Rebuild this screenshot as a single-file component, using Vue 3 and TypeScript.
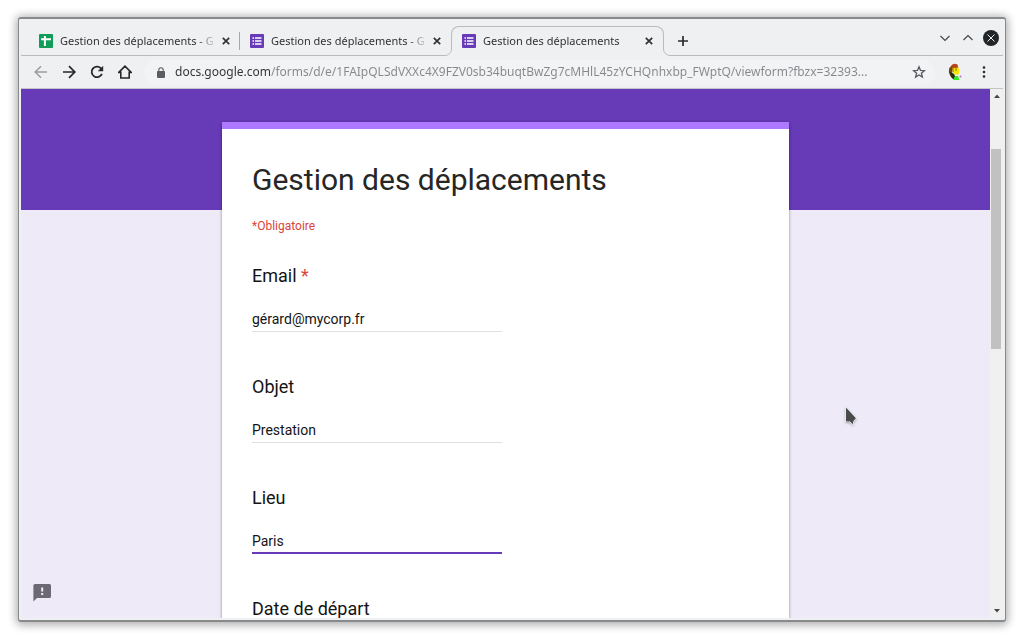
<script setup lang="ts">
import { ref } from 'vue'

interface Tab {
  id: number
  kind: 'sheet' | 'form'
  title: string
  active: boolean
}

interface Field {
  id: string
  label: string
  type: string
  required: boolean
  focused: boolean
  value: string
}

const tabs = ref<Tab[]>([
  { id: 1, kind: 'sheet', title: 'Gestion des déplacements - G', active: false },
  { id: 2, kind: 'form', title: 'Gestion des déplacements - G', active: false },
  { id: 3, kind: 'form', title: 'Gestion des déplacements', active: true },
])

const address = ref(
  'docs.google.com/forms/d/e/1FAIpQLSdVXXc4X9FZV0sb34buqtBwZg7cMHlL45zYCHQnhxbp_FWptQ/viewform?fbzx=32393...',
)

const fields = ref<Field[]>([
  { id: 'email', label: 'Email', type: 'text', required: true, focused: false, value: 'gérard@mycorp.fr' },
  { id: 'objet', label: 'Objet', type: 'text', required: false, focused: false, value: 'Prestation' },
  { id: 'lieu', label: 'Lieu', type: 'text', required: false, focused: true, value: 'Paris' },
  { id: 'depart', label: 'Date de départ', type: 'text', required: false, focused: false, value: '' },
])
</script>

<template>
  <div class="desktop">
    <div class="window">
      <header class="tabstrip">
        <nav class="tabs">
          <div v-for="tab in tabs" :key="tab.id" class="tab" :class="{ active: tab.active }">
            <svg v-if="tab.active" class="flare flare-left" viewBox="0 0 8 8" aria-hidden="true">
              <rect width="8" height="8" fill="#eff0f1" />
              <path d="M0 7.5H1A6.5 6.5 0 0 0 7.5 1V0" fill="none" stroke="#b9bbbe" />
            </svg>
            <button class="tab-label" type="button">
              <svg v-if="tab.kind === 'sheet'" class="favicon" viewBox="0 0 14 14" aria-hidden="true">
                <rect width="14" height="14" rx="1" fill="#0f9d58" />
                <path d="M2 5.2H12M5.9 2V12" stroke="#fff" stroke-width="2" fill="none" />
              </svg>
              <svg v-else class="favicon" viewBox="0 0 14 14" aria-hidden="true">
                <rect width="14" height="14" rx="1" fill="#673ab7" />
                <path
                  d="M2.5 4H4M5 4H11.5M2.5 7H4M5 7H11.5M2.5 10H4M5 10H11.5"
                  stroke="#fff"
                  stroke-width="1.7"
                  fill="none"
                />
              </svg>
              <span class="tab-title">{{ tab.title }}</span>
            </button>
            <button class="tab-close" type="button" aria-label="Fermer l'onglet">
              <svg viewBox="0 0 8 8" aria-hidden="true">
                <path d="M.8.8 7.2 7.2M7.2.8.8 7.2" stroke="#303336" stroke-width="1.7" />
              </svg>
            </button>
            <svg v-if="tab.active" class="flare flare-right" viewBox="0 0 8 8" aria-hidden="true">
              <rect width="8" height="8" fill="#eff0f1" />
              <path d="M8 7.5H7A6.5 6.5 0 0 1 .5 1V0" fill="none" stroke="#b9bbbe" />
            </svg>
          </div>
          <button class="new-tab" type="button" aria-label="Nouvel onglet">
            <svg viewBox="0 0 10 10" aria-hidden="true">
              <path d="M5 0V10M0 5H10" stroke="#2b2e31" stroke-width="1.7" />
            </svg>
          </button>
        </nav>
        <div class="window-controls">
          <button type="button" aria-label="Réduire">
            <svg viewBox="0 0 16 16" aria-hidden="true">
              <path d="M3.5 6 8 10.5 12.5 6" fill="none" stroke="#45484b" stroke-width="1.2" />
            </svg>
          </button>
          <button type="button" aria-label="Agrandir">
            <svg viewBox="0 0 16 16" aria-hidden="true">
              <path d="M3.5 10 8 5.5 12.5 10" fill="none" stroke="#45484b" stroke-width="1.2" />
            </svg>
          </button>
          <button type="button" aria-label="Fermer">
            <svg viewBox="0 0 16 16" aria-hidden="true">
              <circle cx="8" cy="8" r="8" fill="#232629" />
              <path d="M4.5 4.5 11.5 11.5M11.5 4.5 4.5 11.5" stroke="#eff0f1" />
            </svg>
          </button>
        </div>
      </header>

      <div class="toolbar">
        <div class="nav-buttons">
          <button type="button" aria-label="Précédent">
            <svg viewBox="0 0 14 14" aria-hidden="true">
              <path d="M13 7H1.5M7 1.2 1.2 7 7 12.8" fill="none" stroke="#9b9da0" stroke-width="1.5" />
            </svg>
          </button>
          <button type="button" aria-label="Suivant">
            <svg viewBox="0 0 14 14" aria-hidden="true">
              <path d="M1 7H12.5M7 1.2 12.8 7 7 12.8" fill="none" stroke="#26292c" stroke-width="1.7" />
            </svg>
          </button>
          <button type="button" aria-label="Actualiser">
            <svg viewBox="0 0 14 14" aria-hidden="true">
              <path d="M11.9 8.8A5.3 5.3 0 1 1 10.8 3.2L12 4.4" fill="none" stroke="#26292c" stroke-width="1.8" />
              <path d="M13.2.8V6.2H7.8Z" fill="#26292c" />
            </svg>
          </button>
          <button type="button" aria-label="Accueil">
            <svg viewBox="0 0 14 14" aria-hidden="true">
              <path d="M.8 7.4 7 1.2 13.2 7.4H11.2V13H2.8V7.4Z" fill="none" stroke="#26292c" stroke-width="1.6" />
            </svg>
          </button>
        </div>
        <div class="omnibox">
          <svg class="lock" viewBox="0 0 8 11" aria-hidden="true">
            <rect y="4" width="8" height="7" rx="1" fill="#5a5d61" />
            <path d="M1.8 4.5V3A2.2 2.2 0 0 1 6.2 3V4.5" fill="none" stroke="#5a5d61" stroke-width="1.1" />
          </svg>
          <input v-model="address" class="address" type="text" aria-label="Adresse" spellcheck="false" />
          <button class="star" type="button" aria-label="Ajouter aux favoris">
            <svg viewBox="0 0 14 14" aria-hidden="true">
              <path
                d="M7 1.8 8.5 5.4 12.4 5.7 9.4 8.2 10.4 12.1 7 10 3.6 12.1 4.6 8.2 1.6 5.7 5.5 5.4Z"
                fill="none"
                stroke="#55585c"
                stroke-width="1.3"
              />
            </svg>
          </button>
        </div>
        <button class="profile" type="button" aria-label="Profil">
          <svg viewBox="0 0 14 18" aria-hidden="true">
            <path d="M2.5 3.5Q5-.8 9.5 1.5L10.5 6 3 7Z" fill="#b8431b" />
            <path d="M1 7Q1 3 4 4.5L4.5 15Q0 11 1 7Z" fill="#6e4a08" />
            <path d="M4.5 5 10.5 4.5Q12.5 8 10 12L5 11Z" fill="#f7e600" />
            <path d="M5 4V9M8 4V8" stroke="#8f6b00" />
            <path d="M2 9 6 11 8.5 16H5Q2 14 2 9Z" fill="#292b0c" />
            <path d="M7 13H10L11.5 17H5Z" fill="#37e52a" />
            <circle cx="12.5" cy="13.5" r="1" fill="#bf68d1" />
          </svg>
        </button>
        <button class="more" type="button" aria-label="Menu">
          <svg viewBox="0 0 4 12" aria-hidden="true">
            <circle cx="2" cy="1.5" r="1.3" fill="#26292c" />
            <circle cx="2" cy="6" r="1.3" fill="#26292c" />
            <circle cx="2" cy="10.5" r="1.3" fill="#26292c" />
          </svg>
        </button>
      </div>

      <div class="viewport">
        <main class="page">
          <form class="card" @submit.prevent>
            <h1>Gestion des déplacements</h1>
            <p class="required-note">*Obligatoire</p>
            <div v-for="field in fields" :key="field.id" class="field">
              <label :for="field.id">
                {{ field.label }}
                <span v-if="field.required" class="asterisk">*</span>
              </label>
              <input
                :id="field.id"
                v-model="field.value"
                :type="field.type"
                :class="{ focused: field.focused }"
                :required="field.required"
                spellcheck="false"
              />
            </div>
          </form>
          <button class="feedback" type="button" aria-label="Signaler un problème">
            <svg viewBox="0 0 18 18" aria-hidden="true">
              <path d="M2 0H16.5Q18 0 18 1.5V12.5Q18 14 16.5 14H4L.4 17.4V1.5Q.4 0 2 0Z" fill="#6c6975" />
              <path d="M9.2 3.5V7.5M9.2 9V11" stroke="#f4f1fb" stroke-width="2" />
            </svg>
          </button>
          <svg class="pointer" viewBox="0 0 14 20" aria-hidden="true">
            <path
              d="M2 1.5V15.5H6L8.7 18.2 9.5 15 12 12.2Z"
              fill="#484b4c"
              stroke="#fff"
              stroke-width="1.2"
              paint-order="stroke"
            />
          </svg>
        </main>
        <div class="scrollbar">
          <button type="button" aria-label="Défiler vers le haut">
            <svg viewBox="0 0 6 4" aria-hidden="true"><path d="M0 4 3 .5 6 4Z" fill="#45484b" /></svg>
          </button>
          <div class="track"><div class="thumb"></div></div>
          <button type="button" aria-label="Défiler vers le bas">
            <svg viewBox="0 0 6 4" aria-hidden="true"><path d="M0 0 3 3.5 6 0Z" fill="#45484b" /></svg>
          </button>
        </div>
      </div>
    </div>
  </div>
</template>

<style>
body {
  margin: 0;
  background: #fff;
}
</style>

<style scoped>
* {
  box-sizing: border-box;
}

button {
  display: flex;
  align-items: center;
  justify-content: center;
  flex: none;
  margin: 0;
  padding: 0;
  border: 0;
  background: none;
  font: inherit;
  color: inherit;
}

svg {
  display: block;
  flex: none;
}

.desktop {
  height: 100vh;
  padding: 17px 18px;
  font-family: "Noto Sans", sans-serif;
}

.window {
  display: flex;
  flex-direction: column;
  height: 100%;
  padding: 0 2px 2px;
  border: 1px solid #888a8b;
  border-top-width: 2px;
  border-bottom-width: 2px;
  border-radius: 3px;
  background: #eff0f1;
  box-shadow: 0 1px 9px 2px rgba(0, 0, 0, 0.32);
}

.tabstrip {
  display: flex;
  flex: none;
  justify-content: space-between;
  height: 37px;
  padding-left: 8px;
  box-shadow: inset 0 -1px #b9bbbe;
}

.tabs {
  display: flex;
  align-items: flex-end;
  min-width: 0;
}

.tab {
  position: relative;
  display: flex;
  align-items: center;
  width: 211px;
  height: 30px;
  padding: 0 9px 0 10px;
}

.tab:first-child::after {
  content: "";
  position: absolute;
  top: 6px;
  right: 0;
  width: 1px;
  height: 18px;
  background: #a6a8ab;
}

.tab.active {
  width: 213px;
  padding-bottom: 1px;
  border: 1px solid #b9bbbe;
  border-bottom: 0;
  border-radius: 8px 8px 0 0;
  background: #eff0f1;
}

.flare {
  position: absolute;
  bottom: 0;
  width: 8px;
  height: 8px;
}

.flare-left {
  left: -8px;
}

.flare-right {
  right: -8px;
}

.tab-label {
  flex: 1;
  gap: 7px;
  min-width: 0;
  justify-content: flex-start;
}

.favicon {
  width: 14px;
  height: 14px;
}

.tab-title {
  flex: 1;
  overflow: hidden;
  white-space: nowrap;
  text-align: left;
  font-size: 11px;
  line-height: 18px;
  color: #2f3235;
  mask-image: linear-gradient(to right, #000 calc(100% - 20px), transparent);
}

.tab-close {
  width: 10px;
  height: 16px;
  margin-left: 4px;
}

.tab-close svg {
  width: 8px;
  height: 8px;
}

.new-tab {
  width: 22px;
  height: 30px;
  margin-left: 8px;
}

.new-tab svg {
  width: 10px;
  height: 10px;
}

.window-controls {
  display: flex;
  gap: 7px;
  align-items: center;
  height: 38px;
  padding-right: 4px;
}

.window-controls svg {
  width: 16px;
  height: 16px;
}

.toolbar {
  display: flex;
  flex: none;
  align-items: center;
  height: 33px;
  padding: 0 17px 0 13px;
  border-bottom: 1px solid #c3c4c8;
}

.nav-buttons {
  display: flex;
  gap: 14px;
}

.nav-buttons svg {
  width: 14px;
  height: 14px;
}

.omnibox {
  display: flex;
  flex: 1;
  align-items: center;
  min-width: 0;
  height: 25px;
  margin-left: 12px;
  padding: 0 9px 0 13px;
  border-radius: 13px;
  background: #f1f3f4;
}

.lock {
  width: 8px;
  height: 11px;
}

.address {
  flex: 1;
  min-width: 0;
  height: 20px;
  margin-left: 10px;
  padding: 0;
  border: 0;
  outline: 0;
  background: linear-gradient(to right, #303336 95px, #85888b 95px);
  background-clip: text;
  font-family: inherit;
  font-size: 12px;
  line-height: 20px;
  color: #85888b;
  -webkit-text-fill-color: transparent;
}

.star {
  margin-left: 8px;
}

.star svg {
  width: 14px;
  height: 14px;
}

.profile {
  margin-left: 13px;
}

.profile svg {
  width: 14px;
  height: 18px;
}

.more {
  margin-left: 20px;
}

.more svg {
  width: 4px;
  height: 12px;
}

.viewport {
  display: flex;
  flex: 1;
  min-height: 0;
}

.page {
  position: relative;
  flex: 1;
  overflow: hidden;
  padding: 33px 24px 0;
  background: linear-gradient(#673ab7 121px, #eeeaf8 121px);
  font-family: Roboto, sans-serif;
}

.card {
  max-width: 567px;
  margin: 0 auto;
  padding: 33px 30px;
  border-top: 7px solid #ae78ff;
  background: #fff;
  box-shadow: 0 1px 3px rgba(0, 0, 0, 0.4);
}

h1 {
  margin: 0;
  font-size: 30px;
  font-weight: 400;
  line-height: 36px;
  color: #262626;
}

.required-note {
  margin: 20px 0 30px;
  font-size: 12px;
  line-height: 16px;
  color: #db4437;
}

.field {
  display: flex;
  flex-direction: column;
  align-items: flex-start;
  height: 111px;
}

.field label {
  font-size: 18px;
  line-height: 24px;
  color: #141414;
}

.asterisk {
  color: #db4437;
}

.field input {
  width: 250px;
  max-width: 100%;
  height: 27px;
  margin-top: 17px;
  padding: 2px 0 0;
  border: 0;
  border-bottom: 1px solid #dfdfdf;
  border-radius: 0;
  outline: 0;
  background: none;
  font-family: inherit;
  font-size: 14px;
  color: #141414;
}

.field input.focused {
  border-bottom: 2px solid #673ab7;
}

.feedback {
  position: absolute;
  bottom: 16px;
  left: 12px;
}

.feedback svg {
  width: 18px;
  height: 18px;
}

.pointer {
  position: absolute;
  top: 317px;
  left: 823px;
  width: 14px;
  height: 20px;
  filter: drop-shadow(0 1px 1px rgba(0, 0, 0, 0.3));
}

.scrollbar {
  display: flex;
  flex: none;
  flex-direction: column;
  width: 13px;
  background: #f0f0f0;
}

.scrollbar button {
  width: 13px;
  height: 14px;
}

.scrollbar button svg {
  width: 6px;
  height: 4px;
}

.track {
  flex: 1;
  padding: 46px 2px 0 1px;
}

.thumb {
  height: 200px;
  background: #c1c1c1;
}
</style>
